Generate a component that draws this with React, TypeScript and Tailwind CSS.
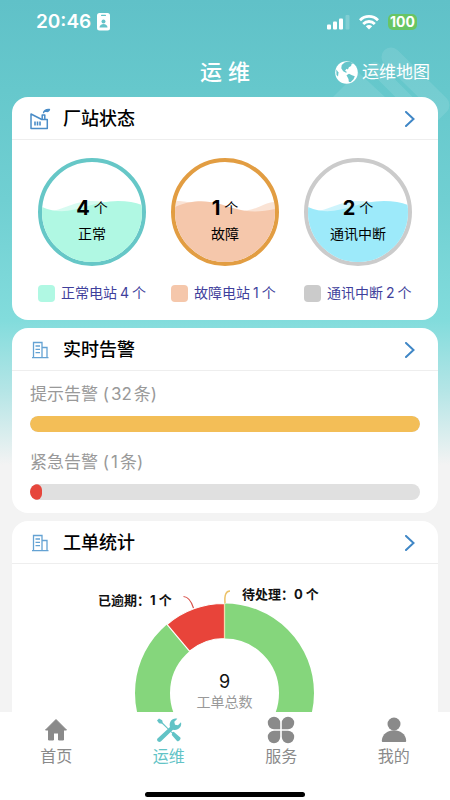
import React from "react";

const fontStack = "font-['Inter','Noto_Sans_CJK_SC',sans-serif]";

// ---------- icons ----------

const FactoryIcon: React.FC = () => (
  <svg className="h-6 w-6" viewBox="0 0 24 24" fill="none" stroke="#4a8cc7" strokeWidth="1.500" strokeLinejoin="round">
    <path d="M3 7v14.500h16.300V12.500h-5.500L3 7z" />
    <path d="M14.200 12.500V8h2.600v4.500" />
    <path d="M7 14.500v4M9.500 14.500v4M12 14.500v4" strokeWidth="1.600" />
    <path d="M14.800 6.300c.3-3.500 3.400-5 7.400-4.300-.2 2.600-2.200 3.500-4.200 3-1-.2-1.800.3-2 1.300z" fill="#4a8cc7" stroke="none" />
  </svg>
);

const BuildingIcon: React.FC = () => (
  <svg className="h-6 w-6" viewBox="0 0 24 24" fill="none" stroke="#64a2d3" strokeWidth="1.300">
    <path d="M5.500 19.500V4.500h8.500v15M14 9.500h5v10M4 19.600h16.500" />
    <path d="M7.500 8h4.500M7.500 11.300h4.500M7.500 14.600h4.500" />
  </svg>
);

const ChevronIcon: React.FC = () => (
  <svg className="h-4 w-3" viewBox="0 0 12 16" fill="none" stroke="#4087c6" strokeWidth="2" strokeLinecap="round">
    <path d="M2 1l7.500 7L2 15" />
  </svg>
);

const BadgeIcon: React.FC = () => (
  <svg className="h-[18px] w-[13px]" viewBox="0 0 13 18">
    <rect width="13" height="17.500" rx="2.500" fill="#fff" />
    <rect x="4" y="1.800" width="5" height="1.300" rx=".6" fill="#63c3c9" />
    <circle cx="6.500" cy="8.500" r="2" fill="#63c3c9" />
    <path d="M2.500 14.500c0-4.800 8-4.800 8 0z" fill="#63c3c9" />
  </svg>
);

const SignalIcon: React.FC = () => (
  <svg className="h-[15px] w-[23px]" viewBox="0 0 23 15" fill="#fff">
    <rect x="0" y="9.500" width="4" height="5" rx="1" />
    <rect x="6" y="6.500" width="4" height="8" rx="1" />
    <rect x="12" y="3.500" width="4" height="11" rx="1" />
    <rect x="18.500" y="0" width="4" height="14.500" rx="1" opacity=".2" />
  </svg>
);

const WifiIcon: React.FC = () => (
  <svg className="h-[15px] w-5" viewBox="0 0 20 15" fill="none" stroke="#fff" strokeWidth="2.800">
    <path d="M1 5.200c5-5 13-5 18 0" />
    <path d="M4.200 8.900c3.300-3.200 8.300-3.200 11.600 0" />
    <path d="M10 14.500l-3.200-3.300c1.800-1.600 4.600-1.600 6.400 0z" fill="#fff" stroke="none" />
  </svg>
);

const GlobeIcon: React.FC = () => (
  <svg className="h-[23px] w-[23px]" viewBox="0 0 23 23">
    <circle cx="11.500" cy="11.500" r="11.300" fill="#fff" />
    <path d="M8 1.800C11 .8 15 1 17.500 3L15.500 3.200 14.800 5.500 12.500 7 11.500 9.200 10 8.500 8.500 10.500 10.500 12 9.500 12.800 6.500 11 4.500 8 5 4.500z" fill="#66c5ca" transform="translate(2 -.3) scale(.95)" />
    <path d="M11.500 14.200L14 12.800 17 14.200 19.800 15.200 18.500 18.200 15.500 21.200 13.800 20.800 13.500 18z" fill="#66c5ca" />
    <path d="M1.300 8.500L3.500 11.500 3 15.500 1.500 14z" fill="#66c5ca" />
  </svg>
);

const HomeIcon: React.FC = () => (
  <svg className="h-7 w-7" viewBox="0 0 28 28" fill="#8a8a8a" stroke="#8a8a8a" strokeLinejoin="round">
    <path d="M14 3.500L24.500 14H21.500V24H16.500V17H11.500V24H6.500V14H3.500z" />
  </svg>
);

const ToolsIcon: React.FC = () => (
  <svg className="h-7 w-7" viewBox="0 0 28 28" fill="#62c3c6">
    {/* screwdriver */}
    <path d="M2 4.500L4 2.500 7.200 4.200 7.800 6.800 17.200 16.300 18.700 15.800 25.300 21.500C26.500 22.800 23.500 26.300 22 25L16.800 19 17 17.300 7 7.800 4 7.300z" />
    {/* wrench */}
    <path d="M2.500 22.500L15 11C13.500 6 17.500 1.300 22.300 2.800L19.300 5.800 20 8.800 23 9.300 26 6.300C27.200 11 23 15 18 13.700L5.800 25.500C3.800 27 1 24.500 2.500 22.500z" />
  </svg>
);

const CloverIcon: React.FC = () => (
  <svg className="h-7 w-7" viewBox="0 0 28 28" fill="#8a8a8a">
    <path d="M13.200 13.200H7A6.200 6.200 0 1 1 13.200 7z" />
    <path d="M14.800 13.200V7a6.200 6.200 0 1 1 6.200 6.200z" />
    <path d="M13.200 14.800V21A6.200 6.200 0 1 1 7 14.800z" />
    <path d="M14.800 14.800H21A6.200 6.200 0 1 1 14.800 21z" />
  </svg>
);

const UserIcon: React.FC = () => (
  <svg className="h-7 w-7" viewBox="0 0 28 28" fill="#8a8a8a">
    <circle cx="14" cy="8" r="6.500" />
    <path d="M1.800 24.800C2.500 10.800 25.500 10.800 26.200 24.800c0 .8-.4 1.200-1.200 1.200H3c-.8 0-1.200-.4-1.200-1.200z" />
  </svg>
);

// ---------- building blocks ----------

interface CardProps {
  title: string;
  icon: React.ReactNode;
  children: React.ReactNode;
}

const Card: React.FC<CardProps> = ({ title, icon, children }) => (
  <section className="overflow-hidden rounded-2xl bg-white">
    <header className="flex h-[43px] items-center border-b border-[#eee] pt-px pr-[22px] pl-4">
      {icon}
      <h2 className="ml-[11px] flex-1 text-lg font-medium text-black">{title}</h2>
      <button type="button" aria-label={title}>
        <ChevronIcon />
      </button>
    </header>
    {children}
  </section>
);

const gauges = [
  {
    count: 4, label: "正常", legend: "正常电站",
    ring: "border-[#66c7c7]", swatch: "bg-[#b0f8e3]", fill: "#b0f8e3",
    back: "M0 50C20 50 30 39 50 39S80 50 100 46V100H0z",
    front: "M0 45C28 57 45 39 76 39Q90 39 100 43V100H0z",
  },
  {
    count: 1, label: "故障", legend: "故障电站",
    ring: "border-[#e29d42]", swatch: "bg-[#f5c7ab]", fill: "#f5c7ab",
    back: "M0 39C25 39 35 49 60 49S85 41 100 40V100H0z",
    front: "M0 45C25 34 42 41 58 46S86 50 100 47V100H0z",
  },
  {
    count: 2, label: "通讯中断", legend: "通讯中断",
    ring: "border-[#cbcbcb]", swatch: "bg-[#cbcbcb]", fill: "#9deafa",
    back: "M0 50C20 50 30 39 50 39S80 50 100 46V100H0z",
    front: "M0 45C28 57 45 39 76 39Q90 39 100 43V100H0z",
  },
];

const StationStatus: React.FC = () => (
  <div className="flex justify-between px-[26px] pt-[18px] pb-4">
    {gauges.map((g) => (
      <div key={g.legend} className="flex w-[108px] flex-col items-center gap-4">
        <div className={`relative h-[108px] w-[108px] overflow-hidden rounded-full border-4 ${g.ring}`}>
          <svg className="absolute inset-0 h-full w-full" viewBox="0 0 100 100" fill={g.fill}>
            <path d={g.back} opacity=".5" />
            <path d={g.front} />
          </svg>
          <div className="relative flex h-full flex-col items-center pt-8 text-black">
            <p className="flex h-7 items-center gap-1">
              <span className="text-xl font-bold">{g.count}</span>
              <span className="text-sm">个</span>
            </p>
            <p className="text-sm leading-6">{g.label}</p>
          </div>
        </div>
        <div className="flex h-[22px] w-full items-center gap-1.5 whitespace-nowrap">
          <span className={`h-[17px] w-[17px] shrink-0 rounded ${g.swatch}`} />
          <span className="flex gap-[3px] text-sm text-[#3f3f9c]">
            <span>{g.legend}</span>
            <span>{g.count}</span>
            <span>个</span>
          </span>
        </div>
      </div>
    ))}
  </div>
);

const alarms = [
  { name: "提示告警", count: 32, percent: 100, color: "bg-[#f3be57]" },
  { name: "紧急告警", count: 1, percent: 3, color: "bg-[#e6463c]" },
];

const AlarmBars: React.FC = () => (
  <div className="flex flex-col gap-4 px-[18px] pt-[9px] pb-[13px]">
    {alarms.map((a) => (
      <div key={a.name}>
        <p className="mb-2 text-[17px] leading-7 text-[#999]">
          {a.name} (<span className="mx-0.5">{a.count}</span>条)
        </p>
        <div className="h-4 overflow-hidden rounded-full bg-[#e0e0e0]">
          <div className={`h-full rounded-full ${a.color}`} style={{ width: `${a.percent}%` }} />
        </div>
      </div>
    ))}
  </div>
);

const OrderChart: React.FC = () => (
  <svg className="w-full" viewBox="0 0 426 240">
    {/* ring */}
    <circle cx="212.500" cy="129" r="72" fill="none" stroke="#85d67c" strokeWidth="35" />
    <path d="M154.970 60.440A89.500 89.500 0 0 1 212.500 39.500V74.500A54.500 54.500 0 0 0 177.470 87.250z" fill="#e8443a" stroke="#fff" strokeWidth="1.200" />
    <path d="M212.500 39V74.500" stroke="#f3dca8" strokeWidth="1" />
    {/* leader lines */}
    <path d="M171.500 32.500Q178 33 181.500 44" fill="none" stroke="#d9534c" strokeWidth="1.200" />
    <path d="M213 39Q212 27 218 27" fill="none" stroke="#ecc268" strokeWidth="1.500" />
    <g fontSize="13" fontWeight="700" fill="#111">
      <text x="86" y="41">已逾期：1 个</text>
      <text x="230" y="35">待处理：0 个</text>
    </g>
    <text x="212.500" y="124" textAnchor="middle" fontSize="18" fill="#111">9</text>
    <text x="212.500" y="143" textAnchor="middle" fontSize="14" fill="#999">工单总数</text>
  </svg>
);

const tabs = [
  { label: "首页", icon: <HomeIcon />, active: false },
  { label: "运维", icon: <ToolsIcon />, active: true },
  { label: "服务", icon: <CloverIcon />, active: false },
  { label: "我的", icon: <UserIcon />, active: false },
];

const TabBar: React.FC = () => (
  <nav className="flex h-[88px] shrink-0 flex-col bg-white">
    <div className="flex flex-1 pt-1">
      {tabs.map((t) => (
        <button
          key={t.label}
          type="button"
          className={`flex flex-1 flex-col items-center text-base ${t.active ? "text-[#62c3c6]" : "text-[#8a8a8a]"}`}
        >
          {t.icon}
          <span>{t.label}</span>
        </button>
      ))}
    </div>
    <div className="mx-auto mb-[3px] h-[5px] w-40 rounded-full bg-black" />
  </nav>
);

const App: React.FC = () => {
  return (
    <div className={`relative flex h-screen flex-col overflow-hidden bg-[#f3f3f3] bg-[linear-gradient(#60c1c8_0px,#66c8cc_90px,#70cfd2_200px,#82dcdc_320px,#b4e5e6_390px,#f3f3f3_465px)] ${fontStack}`}>
      {/* faint logo behind the header */}
      <svg className="absolute top-0 right-0 h-40 w-32" viewBox="0 0 128 160" fill="none" stroke="#fff" strokeOpacity=".1">
        <path d="M69 57L118 105L110 113" strokeWidth="19" strokeLinecap="round" strokeLinejoin="round" />
        <path d="M53 68L87 102" strokeWidth="12" strokeLinecap="round" />
        <path d="M10 98L36 72L64 98z" fill="#fff" fillOpacity=".1" stroke="none" />
      </svg>

      <div className="relative flex h-11 shrink-0 items-center justify-between pr-[33px] pl-9 text-white">
        <div className="flex items-center gap-1.5">
          <span className="text-[19px] font-semibold">20:46</span>
          <BadgeIcon />
        </div>
        <div className="flex items-center gap-[9px]">
          <SignalIcon />
          <WifiIcon />
          <span className="rounded-[5px] bg-[#68c564] px-0.5 text-sm leading-4 font-bold">100</span>
        </div>
      </div>

      <header className="relative grid h-[53px] shrink-0 grid-cols-3 items-center px-5 pt-1 text-white">
        <h1 className="col-start-2 text-center text-[22px] font-medium">运 维</h1>
        <a href="#map" className="flex items-center justify-end gap-1 text-[17px]">
          <GlobeIcon />
          运维地图
        </a>
      </header>

      <main className="relative flex min-h-0 flex-1 flex-col overflow-hidden px-3">
        <div className="flex shrink-0 flex-col gap-2">
          <Card title="厂站状态" icon={<FactoryIcon />}>
            <StationStatus />
          </Card>
          <Card title="实时告警" icon={<BuildingIcon />}>
            <AlarmBars />
          </Card>
          <Card title="工单统计" icon={<BuildingIcon />}>
            <OrderChart />
          </Card>
        </div>
      </main>

      <TabBar />
    </div>
  );
};

export default App;
